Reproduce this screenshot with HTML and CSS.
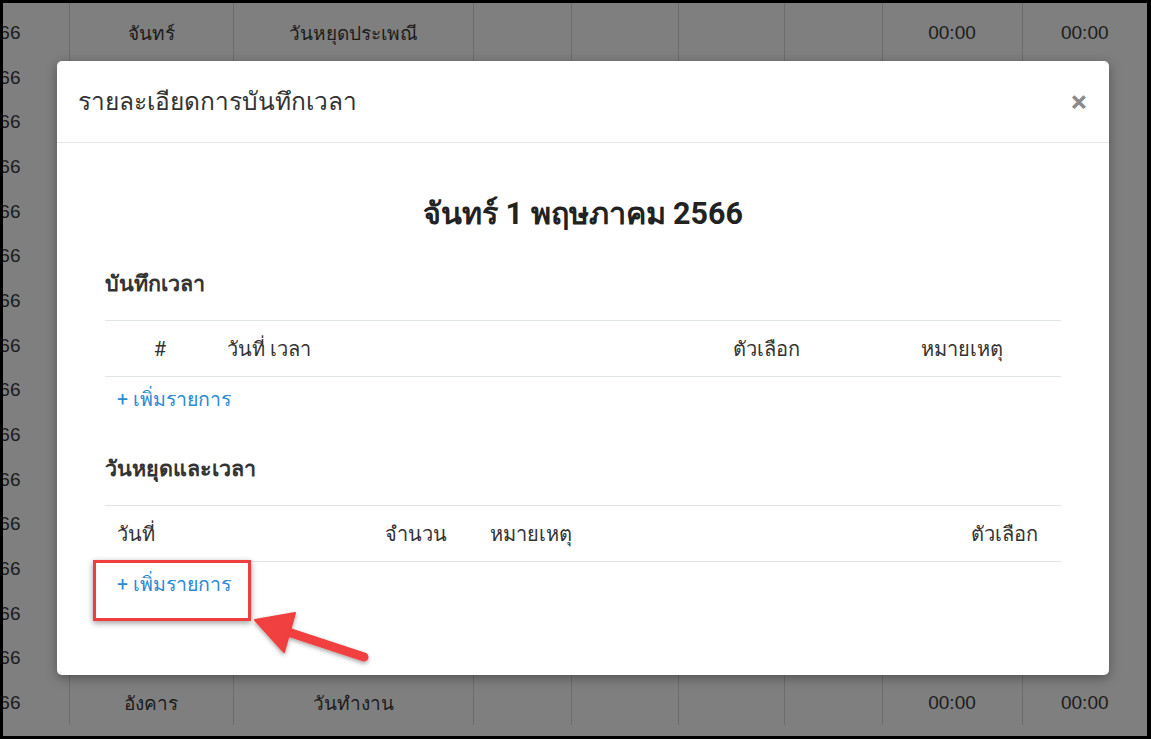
FILE: index.html
```html
<!DOCTYPE html>
<html lang="th">
<head>
  <meta charset="UTF-8">
  <meta name="viewport" content="width=device-width, initial-scale=1.0">
  <title>รายละเอียดการบันทึกเวลา</title>
  <link rel="stylesheet" href="styles.css">
</head>
<body>
  <div class="screen">
    <table class="timesheet">
      <colgroup>
        <col class="c-date"><col class="c-day"><col class="c-type"><col class="c-a"><col class="c-b">
        <col class="c-c"><col class="c-d"><col class="c-in"><col class="c-out">
      </colgroup>
      <tr><td>30/04/2566</td><td>อาทิตย์</td><td>วันหยุด</td><td></td><td></td><td></td><td></td><td>00:00</td><td>00:00</td></tr>
      <tr><td>01/05/2566</td><td>จันทร์</td><td>วันหยุดประเพณี</td><td></td><td></td><td></td><td></td><td>00:00</td><td>00:00</td></tr>
      <tr><td>02/05/2566</td><td>อังคาร</td><td>วันทำงาน</td><td></td><td></td><td></td><td></td><td>00:00</td><td>00:00</td></tr>
      <tr><td>03/05/2566</td><td>พุธ</td><td>วันทำงาน</td><td></td><td></td><td></td><td></td><td>00:00</td><td>00:00</td></tr>
      <tr><td>04/05/2566</td><td>พฤหัสบดี</td><td>วันทำงาน</td><td></td><td></td><td></td><td></td><td>00:00</td><td>00:00</td></tr>
      <tr><td>05/05/2566</td><td>ศุกร์</td><td>วันทำงาน</td><td></td><td></td><td></td><td></td><td>00:00</td><td>00:00</td></tr>
      <tr><td>06/05/2566</td><td>เสาร์</td><td>วันหยุด</td><td></td><td></td><td></td><td></td><td>00:00</td><td>00:00</td></tr>
      <tr><td>07/05/2566</td><td>อาทิตย์</td><td>วันหยุด</td><td></td><td></td><td></td><td></td><td>00:00</td><td>00:00</td></tr>
      <tr><td>08/05/2566</td><td>จันทร์</td><td>วันทำงาน</td><td></td><td></td><td></td><td></td><td>00:00</td><td>00:00</td></tr>
      <tr><td>09/05/2566</td><td>อังคาร</td><td>วันทำงาน</td><td></td><td></td><td></td><td></td><td>00:00</td><td>00:00</td></tr>
      <tr><td>10/05/2566</td><td>พุธ</td><td>วันทำงาน</td><td></td><td></td><td></td><td></td><td>00:00</td><td>00:00</td></tr>
      <tr><td>11/05/2566</td><td>พฤหัสบดี</td><td>วันทำงาน</td><td></td><td></td><td></td><td></td><td>00:00</td><td>00:00</td></tr>
      <tr><td>12/05/2566</td><td>ศุกร์</td><td>วันทำงาน</td><td></td><td></td><td></td><td></td><td>00:00</td><td>00:00</td></tr>
      <tr><td>13/05/2566</td><td>เสาร์</td><td>วันหยุด</td><td></td><td></td><td></td><td></td><td>00:00</td><td>00:00</td></tr>
      <tr><td>14/05/2566</td><td>อาทิตย์</td><td>วันหยุด</td><td></td><td></td><td></td><td></td><td>00:00</td><td>00:00</td></tr>
      <tr><td>15/05/2566</td><td>จันทร์</td><td>วันทำงาน</td><td></td><td></td><td></td><td></td><td>00:00</td><td>00:00</td></tr>
      <tr><td>16/05/2566</td><td>อังคาร</td><td>วันทำงาน</td><td></td><td></td><td></td><td></td><td>00:00</td><td>00:00</td></tr>
    </table>

    <div class="modal">
      <div class="modal-header">
        <h3 class="modal-title">รายละเอียดการบันทึกเวลา</h3>
        <span class="close">&times;</span>
      </div>
      <div class="modal-body">
        <h2 class="day-title">จันทร์ 1 พฤษภาคม 2566</h2>

        <h4 class="section">บันทึกเวลา</h4>
        <table class="grid grid-time">
          <tr>
            <th class="t-no">#</th>
            <th class="t-date">วันที่ เวลา</th>
            <th class="t-opt">ตัวเลือก</th>
            <th class="t-note">หมายเหตุ</th>
          </tr>
        </table>
        <a class="add-link">+ เพิ่มรายการ</a>

        <h4 class="section section-2">วันหยุดและเวลา</h4>
        <table class="grid grid-leave">
          <tr>
            <th class="l-date">วันที่</th>
            <th class="l-amount">จำนวน</th>
            <th class="l-note">หมายเหตุ</th>
            <th class="l-opt">ตัวเลือก</th>
          </tr>
        </table>
        <a class="add-link">+ เพิ่มรายการ</a>
      </div>

      <div class="mark-box"></div>
      <svg class="mark-arrow" width="130" height="75" viewBox="0 0 130 75">
        <defs>
          <filter id="sh" x="-20%" y="-20%" width="140%" height="150%">
            <feDropShadow dx="0" dy="2" stdDeviation="2" flood-color="#000" flood-opacity="0.35"/>
          </filter>
        </defs>
        <g filter="url(#sh)" fill="#f03f3f" stroke="#f03f3f">
          <line x1="40" y1="36" x2="119" y2="62" stroke-width="9" stroke-linecap="round"/>
          <polygon points="10,25 50,18 39,57" stroke-width="2" stroke-linejoin="round"/>
        </g>
      </svg>
    </div>
  </div>
</body>
</html>
```

FILE: styles.css
```css
body {
  margin: 0;
  background: #000;
  font-family: "Liberation Sans", "Noto Sans", sans-serif;
}
.screen {
  position: relative;
  margin: 3px 0 0 3px;
  width: 1144px;
  height: 733px;
  background: #7f7f7f;
  overflow: hidden;
}

/* page table behind the dialog */
.timesheet {
  border-collapse: collapse;
  table-layout: fixed;
  margin-top: -37px;
  margin-left: -80px;
  width: 1224px;
  font-size: 19px;
  color: #1c1c1c;
}
.timesheet tr {
  height: 44.67px;
}
.timesheet td {
  padding: 0;
  text-align: center;
  border-left: 1px solid #6c6c6c;
  white-space: nowrap;
  overflow: hidden;
}
.timesheet td:first-child {
  border-left: none;
  text-align: right;
  padding-right: 48px;
}
.c-date { width: 146px; }
.c-day { width: 164px; }
.c-type { width: 240px; }
.c-a { width: 98px; }
.c-b { width: 107px; }
.c-c { width: 106px; }
.c-d { width: 98px; }
.c-in { width: 140px; }
.c-out { width: 125px; }

/* dialog */
.modal {
  position: absolute;
  left: 54px;
  top: 58px;
  width: 1052px;
  height: 614px;
  background: #fff;
  border-radius: 5px;
  box-shadow: 0 3px 12px rgba(0, 0, 0, 0.35);
  font-family: Roboto, "Liberation Sans", sans-serif;
  color: #333;
}
.modal-header {
  height: 82px;
  box-sizing: border-box;
  border-bottom: 1px solid #e5e5e5;
  display: flex;
  align-items: center;
  justify-content: space-between;
  padding: 0 22px 0 21px;
}
.modal-title {
  margin: 0;
  font-size: 24.5px;
  font-weight: normal;
  color: #333;
}
.close {
  font-size: 30px;
  font-weight: bold;
  color: #8a8a8a;
  line-height: 1;
}
.modal-body {
  padding: 0 48px;
}
.day-title {
  margin: 53px 0 0;
  font-size: 30.5px;
  line-height: 36px;
  font-weight: bold;
  text-align: center;
  color: #222;
}
.section {
  margin: 38px 0 0;
  font-size: 21.5px;
  line-height: 28px;
  font-weight: bold;
  color: #333;
}
.section-2 {
  margin-top: 43px;
}
.grid {
  width: 100%;
  margin-top: 22px;
  border-collapse: collapse;
  table-layout: fixed;
}
.grid-time th {
  height: 56px;
}
.grid th {
  height: 55px;
  padding: 0 12px;
  border-top: 1px solid #e1e4e8;
  border-bottom: 1px solid #e1e4e8;
  text-align: left;
  font-size: 20px;
  font-weight: normal;
  color: #333;
}
.t-no { width: 86px; text-align: center !important; }
.t-date { width: 482px; }
.t-opt { width: 164px; }
.l-date { width: 244px; }
.l-amount { width: 81px; }
.l-opt { width: 120px; text-align: right !important; padding-right: 23px !important; }
.add-link {
  display: block;
  margin-top: 11px;
  padding-left: 12px;
  line-height: 24px;
  font-size: 19.5px;
  color: #2a8ad6;
}

/* annotation */
.mark-box {
  position: absolute;
  left: 36px;
  top: 499px;
  width: 152px;
  height: 55px;
  border: 3px solid #ef3e3e;
  box-shadow: 0 2px 6px rgba(0, 0, 0, 0.4);
}
.mark-arrow {
  position: absolute;
  left: 188px;
  top: 534px;
}
```
